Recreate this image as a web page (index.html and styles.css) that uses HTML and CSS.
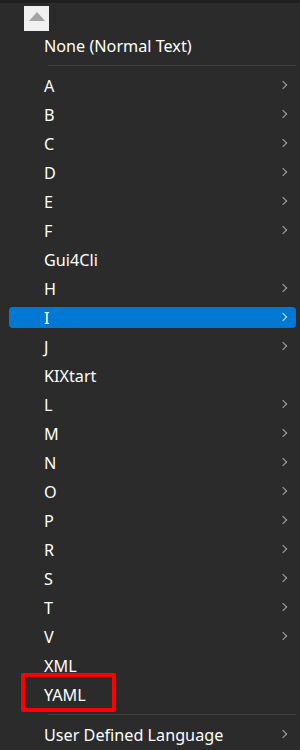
FILE: index.html
```html
<!DOCTYPE html>
<html lang="en">
<head>
  <meta charset="UTF-8">
  <meta name="viewport" content="width=device-width, initial-scale=1.0">
  <title>Language Menu</title>
  <link rel="stylesheet" href="styles.css">
</head>
<body>
  <div class="menu">
    <div class="top-strip"></div>
    <div class="scroll-area">
      <div class="scroll-up">
        <svg width="16" height="10" viewBox="0 0 16 10"><polygon points="8,0 16,9 0,9" fill="#a3a3a3"/></svg>
      </div>
    </div>

    <div class="item">None (Normal Text)</div>
    <div class="sep"></div>

    <div class="item sub">A</div>
    <div class="item sub">B</div>
    <div class="item sub">C</div>
    <div class="item sub">D</div>
    <div class="item sub">E</div>
    <div class="item sub">F</div>
    <div class="item">Gui4Cli</div>
    <div class="item sub">H</div>
    <div class="item sub active">I</div>
    <div class="item sub">J</div>
    <div class="item">KIXtart</div>
    <div class="item sub">L</div>
    <div class="item sub">M</div>
    <div class="item sub">N</div>
    <div class="item sub">O</div>
    <div class="item sub">P</div>
    <div class="item sub">R</div>
    <div class="item sub">S</div>
    <div class="item sub">T</div>
    <div class="item sub">V</div>
    <div class="item">XML</div>
    <div class="item marked">YAML</div>

    <div class="sep"></div>
    <div class="item sub">User Defined Language</div>
  </div>
</body>
</html>
```

FILE: styles.css
```css
body {
  margin: 0;
  background-color: #2b2b2b;
  font-family: "Noto Sans", "Open Sans", sans-serif;
  color: #ffffff;
}

.menu {
  width: 300px;
  height: 750px;
  overflow: hidden;
  background-color: #2b2b2b;
}

.top-strip {
  height: 3px;
  background-color: #1f1f1f;
}

.scroll-area {
  height: 28px;
  padding: 3px 0 0 24px;
  box-sizing: border-box;
}

.scroll-up {
  width: 25px;
  height: 25px;
  background-color: #f0f0f0;
  display: flex;
  justify-content: center;
  align-items: center;
}

.scroll-up svg {
  margin-top: -4px;
}

.item {
  position: relative;
  height: 29px;
  line-height: 30px;
  padding-left: 44px;
  font-size: 16.2px;
  white-space: nowrap;
}

/* chevron for items with a submenu */
.item.sub::after {
  content: "";
  position: absolute;
  right: 14px;
  top: 11px;
  width: 5px;
  height: 5px;
  border-top: 1.5px solid #a8a8a8;
  border-right: 1.5px solid #a8a8a8;
  transform: rotate(45deg);
}

.item.active::before {
  content: "";
  position: absolute;
  left: 9px;
  right: 4px;
  top: 4px;
  height: 21px;
  background-color: #0078d4;
  border-radius: 4px;
  z-index: -1;
}

.item.active {
  z-index: 0;
}

.item.active::after {
  border-color: #cfe3f5;
}

.item.marked::before {
  content: "";
  position: absolute;
  left: 21px;
  top: -7px;
  width: 87px;
  height: 31px;
  border: 4px solid #ff0000;
  border-radius: 2px;
}

.sep {
  height: 11px;
  display: flex;
  align-items: center;
  padding-left: 48px;
  padding-right: 4px;
}

.sep::before {
  content: "";
  flex: 1;
  height: 1px;
  background-color: #424242;
}
```
